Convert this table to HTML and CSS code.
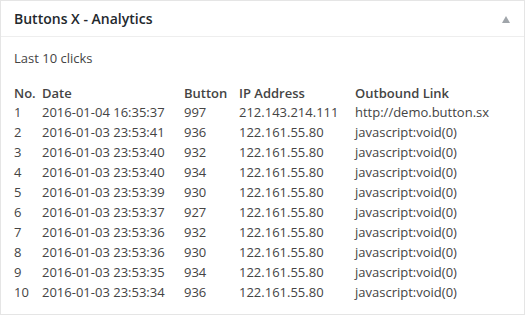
FILE: index.html
```html
<!DOCTYPE html>
<html lang="en">
<head>
    <meta charset="UTF-8">
    <title>Buttons X - Analytics</title>
    <link rel="stylesheet" href="styles.css">
</head>
<body>
    <div class="postbox">
        <div class="postbox-header">
            <h2 class="hndle">Buttons X - Analytics</h2>
            <span class="toggle-indicator"></span>
        </div>
        <div class="inside">
            <p class="intro">Last 10 clicks</p>
            <table class="clicks">
                <thead>
                    <tr>
                        <th class="col-no">No.</th>
                        <th class="col-date">Date</th>
                        <th class="col-button">Button</th>
                        <th class="col-ip">IP Address</th>
                        <th class="col-link">Outbound Link</th>
                    </tr>
                </thead>
                <tbody>
                    <tr><td>1</td><td>2016-01-04 16:35:37</td><td>997</td><td>212.143.214.111</td><td>http://demo.button.sx</td></tr>
                    <tr><td>2</td><td>2016-01-03 23:53:41</td><td>936</td><td>122.161.55.80</td><td>javascript:void(0)</td></tr>
                    <tr><td>3</td><td>2016-01-03 23:53:40</td><td>932</td><td>122.161.55.80</td><td>javascript:void(0)</td></tr>
                    <tr><td>4</td><td>2016-01-03 23:53:40</td><td>934</td><td>122.161.55.80</td><td>javascript:void(0)</td></tr>
                    <tr><td>5</td><td>2016-01-03 23:53:39</td><td>930</td><td>122.161.55.80</td><td>javascript:void(0)</td></tr>
                    <tr><td>6</td><td>2016-01-03 23:53:37</td><td>927</td><td>122.161.55.80</td><td>javascript:void(0)</td></tr>
                    <tr><td>7</td><td>2016-01-03 23:53:36</td><td>932</td><td>122.161.55.80</td><td>javascript:void(0)</td></tr>
                    <tr><td>8</td><td>2016-01-03 23:53:36</td><td>930</td><td>122.161.55.80</td><td>javascript:void(0)</td></tr>
                    <tr><td>9</td><td>2016-01-03 23:53:35</td><td>934</td><td>122.161.55.80</td><td>javascript:void(0)</td></tr>
                    <tr><td>10</td><td>2016-01-03 23:53:34</td><td>936</td><td>122.161.55.80</td><td>javascript:void(0)</td></tr>
                </tbody>
            </table>
        </div>
    </div>
</body>
</html>
```

FILE: styles.css
```css
  html, body {
      margin: 0;
      padding: 0;
      background: #fff;
  }

  body {
      font-family: "Open Sans", sans-serif;
      font-size: 13px;
      color: #444;
  }

  .postbox {
      box-sizing: border-box;
      width: 525px;
      height: 315px;
      border: 1px solid #e5e5e5;
      background: #fff;
  }

  .postbox-header {
      display: flex;
      align-items: center;
      justify-content: space-between;
      height: 35px;
      border-bottom: 1px solid #eee;
      padding: 0 14px 0 13px;
  }

  .hndle {
      margin: 0;
      font-size: 14px;
      font-weight: 600;
      line-height: 1.4;
      color: #23282d;
  }

  .toggle-indicator {
      width: 0;
      height: 0;
      border-left: 4px solid transparent;
      border-right: 4px solid transparent;
      border-bottom: 7px solid #a0a5aa;
      margin-top: 1px;
  }

  .inside {
      padding: 0 12px 12px 13px;
  }

  .intro {
      margin: 12px 0 16px;
      line-height: 19px;
  }

  .clicks {
      border-collapse: collapse;
  }

  .clicks th,
  .clicks td {
      padding: 1px 0;
      line-height: 18px;
      text-align: left;
      white-space: nowrap;
  }

  .clicks th {
      padding: 0;
      font-weight: 600;
  }

  .col-no {
      width: 28px;
  }

  .col-date {
      width: 142px;
  }

  .col-button {
      width: 55px;
  }

  .col-ip {
      width: 116px;
  }
```
